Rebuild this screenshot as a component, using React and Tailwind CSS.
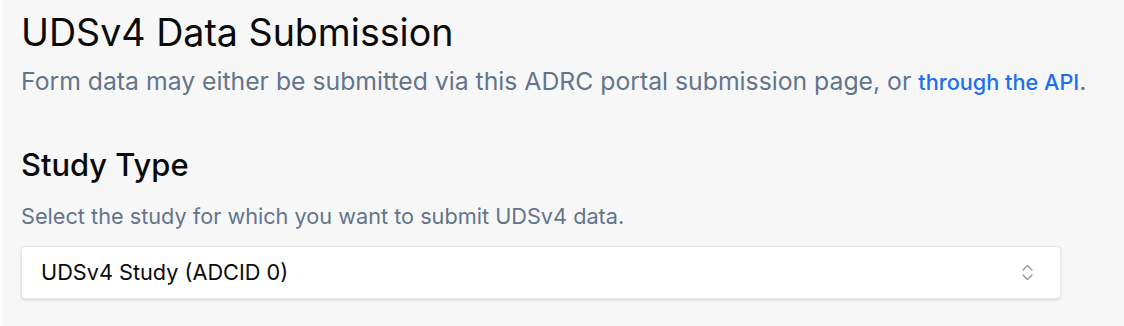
import { ChevronsUpDown } from 'lucide-react';

const App = () => {
  return (
    <div
      className="min-h-screen w-full bg-[#f7f7f7] border-l-2 border-white px-[19px] pt-[11px]"
      style={{ fontFamily: 'Inter, "Noto Sans", sans-serif' }}
    >
      {/* Header */}
      <h1 className="text-[37.6px] leading-[44px] font-normal text-[#0a0a0a]">
        UDSv4 Data Submission
      </h1>
      <p className="mt-[10px] text-[24.75px] leading-[32px] text-[#64748b]">
        Form data may either be submitted via this ADRC portal submission page, or{' '}
        <a href="#" className="text-[21.7px] font-medium text-[#1d6ff2]">
          through the API
        </a>
        .
      </p>

      {/* Study type */}
      <h2 className="mt-[49px] text-[30.9px] leading-[36px] font-medium text-[#0a0a0a]">
        Study Type
      </h2>
      <p className="mt-[19px] text-[21.7px] leading-[28px] text-[#64748b]">
        Select the study for which you want to submit UDSv4 data.
      </p>

      <div className="mt-[16px] w-[1040px] h-[53px] flex items-center justify-between bg-white border border-[#e2e8f0] rounded-[4px] shadow-sm pl-[19px] pr-[22px]">
        <span className="text-[21.7px] text-[#0a0a0a]">UDSv4 Study (ADCID 0)</span>
        <ChevronsUpDown className="w-[21px] h-[21px] text-[#a1a1aa]" strokeWidth={1.75} />
      </div>
    </div>
  );
};

export default App;
